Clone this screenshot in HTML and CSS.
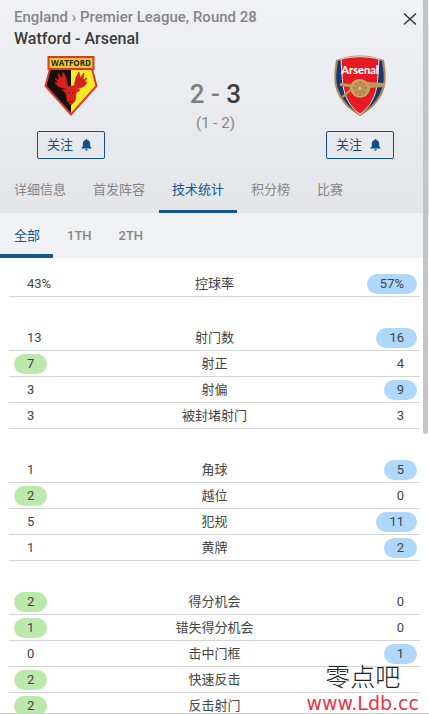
FILE: index.html
```html
<!DOCTYPE html>
<html lang="zh-CN">
<head>
<meta charset="utf-8">
<meta name="viewport" content="width=device-width, initial-scale=1">
<title>Watford - Arsenal</title>
<link rel="stylesheet" href="styles.css">
</head>
<body>
<main class="panel">
  <header class="match">
    <div class="match-top">
      <div>
        <p class="league">England › Premier League, Round 28</p>
        <h1 class="title">Watford - Arsenal</h1>
      </div>
      <button class="close" type="button" aria-label="关闭">
        <svg width="14" height="14" viewBox="0 0 14 14"><path d="M1 1.500 13 12.500M13 1.500 1 12.500" fill="none" stroke="currentColor" stroke-width="1.500"/></svg>
      </button>
    </div>
    <div class="teams">
      <div class="team">
        <svg class="crest" viewBox="0 0 54 62" role="img" aria-label="Watford">
          <path d="M6 14 1.500 31 27 59.500 52.500 31 48 14Z" fill="#f8e72c"/>
          <path d="M6 14 1.500 31 27 59.500V14Z" fill="#170f0c"/>
          <path d="M6 14 1.500 31 27 59.500 52.500 31 48 14Z" fill="none" stroke="#d83a2c" stroke-width="2"/>
          <path d="M27 50 23 46 22 38 18 35 22 34C17 33 12 31 11 27L14 28 11 23 15 25 14 18 18 23 19 17 22 22 23 27 24 31H30L31 27 32 22 35 17 36 23 40 18 39 25 43 23 40 28 43 27C42 31 37 33 32 34L36 35 32 38 31 46Z" fill="#d6231f" stroke="#b01b18" stroke-width=".6"/>
          <path d="M24 37l2 2M30 37l-2 2M25 46l2 1 2-1" stroke="#5b100e" stroke-width="1" fill="none"/>
          <rect x="4.500" y="2" width="45" height="12" fill="#f3c53a" stroke="#d83a2c" stroke-width="2"/>
          <text x="27" y="11" text-anchor="middle" class="crest-watford">WATFORD</text>
        </svg>
        <button class="follow" type="button">关注
          <svg width="11" height="12" viewBox="0 0 12 13"><path d="M5 1a1 1 0 0 1 2 0C9 1.500 10 3 10 5v3l1.500 1.500v.700H.500v-.700L2 8V5c0-2 1-3.500 3-4ZM4.500 11.200h3a1.500 1.500 0 0 1-3 0Z" fill="currentColor"/></svg>
        </button>
      </div>
      <div class="result">
        <p class="score"><span class="lost">2 -</span> 3</p>
        <p class="half">(1 - 2)</p>
      </div>
      <div class="team">
        <svg class="crest" viewBox="0 0 54 62" role="img" aria-label="Arsenal">
          <path d="M3 5C14 1 21 .500 27 .500S40 1 51 5C53 18 54 27 50 37 45 49 36 56 27 61 18 56 9 49 4 37 0 27 1 18 3 5Z" fill="#a58d63"/>
          <path d="M5 6C14 3 21 2 27 2s13 1 22 4c2 13 3 21-1 30-5 12-13 18-21 23C19 54 11 48 6 36 2 27 3 19 5 6Z" fill="#16386c"/>
          <path d="M8 4C20 1 34 1 46 4c-1 15-1 25-4 35-3 9-9 16-15 20-6-4-12-11-15-20C9 29 9 19 8 4Z" fill="#e41b23" stroke="#f4e3e0" stroke-width="1"/>
          <path d="M7 28 18 29C20 25 24 24 28 24L35 27 52 28V32L37 33C37 39 32 43 27 42 22 42 19 39 18 36L10 43 9 41 17 34 16 32 7 31Z" fill="#bd9658"/>
          <circle cx="27" cy="33.500" r="8.500" fill="none" stroke="#d0a96a" stroke-width="1.500"/>
          <path d="M27 26v15M20 33h14M22 28l10 11M32 28 22 39" stroke="#a8783f" stroke-width="1"/>
          <circle cx="27" cy="33.500" r="2" fill="#d9b376"/>
          <text x="27" y="19" text-anchor="middle" class="crest-arsenal">Arsenal</text>
        </svg>
        <button class="follow" type="button">关注
          <svg width="11" height="12" viewBox="0 0 12 13"><path d="M5 1a1 1 0 0 1 2 0C9 1.500 10 3 10 5v3l1.500 1.500v.700H.500v-.700L2 8V5c0-2 1-3.500 3-4ZM4.500 11.200h3a1.500 1.500 0 0 1-3 0Z" fill="currentColor"/></svg>
        </button>
      </div>
    </div>
    <nav class="tabs">
      <a href="#details">详细信息</a>
      <a href="#lineups">首发阵容</a>
      <a href="#stats" class="active">技术统计</a>
      <a href="#standings">积分榜</a>
      <a href="#matches">比赛</a>
    </nav>
  </header>
  <nav class="periods">
    <a href="#all" class="active">全部</a>
    <a href="#first">1TH</a>
    <a href="#second">2TH</a>
  </nav>
  <section class="stats" id="stats">
    <table>
      <tr><td><span>43%</span></td><th scope="row">控球率</th><td><span class="away">57%</span></td></tr>
    </table>
    <table>
      <tr><td><span>13</span></td><th scope="row">射门数</th><td><span class="away">16</span></td></tr>
      <tr><td><span class="home">7</span></td><th scope="row">射正</th><td><span>4</span></td></tr>
      <tr><td><span>3</span></td><th scope="row">射偏</th><td><span class="away">9</span></td></tr>
      <tr><td><span>3</span></td><th scope="row">被封堵射门</th><td><span>3</span></td></tr>
    </table>
    <table>
      <tr><td><span>1</span></td><th scope="row">角球</th><td><span class="away">5</span></td></tr>
      <tr><td><span class="home">2</span></td><th scope="row">越位</th><td><span>0</span></td></tr>
      <tr><td><span>5</span></td><th scope="row">犯规</th><td><span class="away">11</span></td></tr>
      <tr><td><span>1</span></td><th scope="row">黄牌</th><td><span class="away">2</span></td></tr>
    </table>
    <table>
      <tr><td><span class="home">2</span></td><th scope="row">得分机会</th><td><span>0</span></td></tr>
      <tr><td><span class="home">1</span></td><th scope="row">错失得分机会</th><td><span>0</span></td></tr>
      <tr><td><span>0</span></td><th scope="row">击中门框</th><td><span class="away">1</span></td></tr>
      <tr><td><span class="home">2</span></td><th scope="row">快速反击</th><td></td></tr>
      <tr><td><span class="home">2</span></td><th scope="row">反击射门</th><td></td></tr>
    </table>
  </section>
  <div class="scrollbar"></div>
  <div class="watermark"><div class="mark-name">零点吧</div><div class="mark-url">www.Ldb.cc</div></div>
</main>
</body>
</html>
```
FILE: styles.css
```css
* { box-sizing: border-box; }
body {
  margin: 0;
  background: #fff;
  color: #444;
  font: 13px/20px Roboto, "Noto Sans CJK SC", sans-serif;
}
p, h1 { margin: 0; }
a { text-decoration: none; }
button { font: inherit; cursor: pointer; }

.panel {
  position: relative;
  height: 100vh;
  overflow: hidden;
  border-bottom: 1px solid #ccc;
}
.match { background: linear-gradient(#f0f1f4, #e3e5e8); }
.match-top {
  display: flex;
  justify-content: space-between;
  align-items: flex-start;
  padding: 6px 12px 0 14px;
}
.league {
  color: #858585;
  font-size: 15px;
  font-weight: 500;
  line-height: 22px;
}
.title {
  color: #3c3c3c;
  font-size: 16px;
  font-weight: 500;
  line-height: 22px;
}
.close {
  display: flex;
  margin-top: 6px;
  padding: 0;
  border: 0;
  background: none;
  color: #333;
}
.teams {
  display: flex;
  justify-content: space-between;
  padding: 5px 35px 0 37px;
}
.team {
  display: flex;
  flex-direction: column;
  align-items: center;
  gap: 14px;
}
.crest { width: 54px; height: 62px; }
.crest-watford { font: 700 8px "Open Sans", sans-serif; fill: #2a260c; }
.crest-arsenal { font: 900 11px Lato, sans-serif; fill: #fff; }
.follow {
  display: flex;
  align-items: center;
  justify-content: center;
  gap: 8px;
  width: 68px;
  height: 28px;
  padding: 0 3px 0 0;
  border: 1px solid #0f4f8c;
  border-radius: 2px;
  background: transparent;
  color: #0f4f8c;
}
.result { padding-top: 23px; text-align: center; }
.score {
  color: #3c3c3c;
  font-size: 26px;
  font-weight: 500;
  line-height: 32px;
}
.lost { color: #7d7d7d; }
.half { margin-top: 3px; color: #858585; font-size: 15px; }

.tabs {
  display: flex;
  gap: 1px;
  margin-top: 8px;
  padding-left: 1px;
}
.tabs a {
  height: 46px;
  padding: 0 13px;
  border-bottom: 3px solid transparent;
  color: #858585;
  line-height: 46px;
}
.periods { display: flex; background: #f0f1f4; }
.periods a {
  height: 45px;
  padding: 0 13px 0 14px;
  border-bottom: 4px solid transparent;
  color: #858585;
  font-weight: 500;
  line-height: 45px;
}
.tabs .active, .periods .active {
  border-color: #125690;
  color: #125690;
}
.periods .active { font-weight: 400; }

.stats {
  display: flex;
  flex-direction: column;
  gap: 28px;
  padding: 13px 9px 0;
}
table {
  width: 100%;
  border-collapse: separate;
  border-spacing: 0;
  table-layout: fixed;
}
td, th {
  height: 26px;
  padding: 0 3px 0 5px;
  border-bottom: 1px solid #d4d4d4;
  font-weight: 400;
  text-align: left;
}
th { padding: 0; text-align: center; }
td:last-child { text-align: right; }
td span {
  display: inline-block;
  padding: 0 13px;
  border-radius: 10px;
  vertical-align: top;
}
.home { background: #bbe9ac; }
.away { background: #aed8fb; }

.scrollbar {
  position: absolute;
  top: 0;
  right: 1px;
  width: 5px;
  height: 434px;
  border-radius: 0 0 3px 3px;
  background: #c4c4c7;
}
.watermark {
  position: absolute;
  right: 10px;
  bottom: 0;
  text-align: center;
}
.mark-name {
  color: #222;
  font-size: 25px;
  font-weight: 300;
  line-height: 30px;
}
.mark-url {
  color: #ee3344;
  font: 19px/20px "DejaVu Sans", sans-serif;
}
```
